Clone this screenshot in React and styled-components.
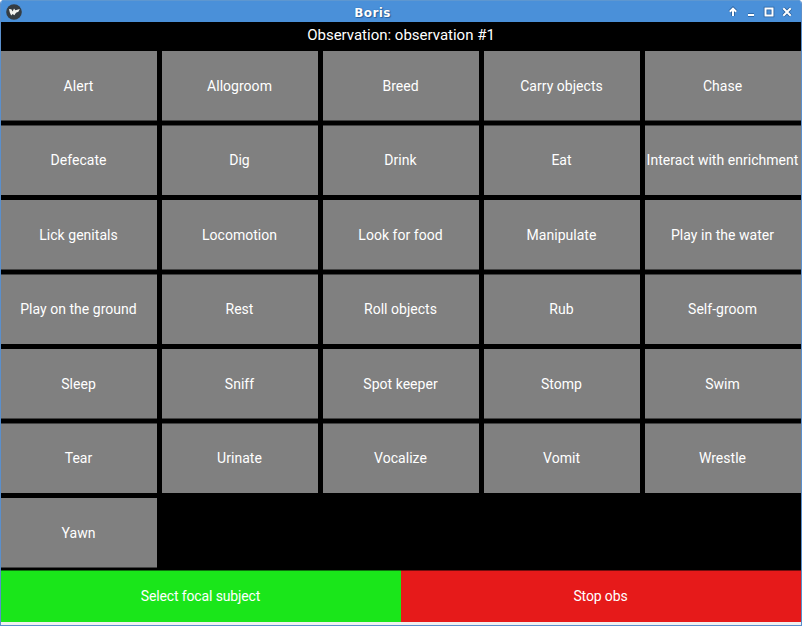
import React from "react";
import styled, { createGlobalStyle } from "styled-components";

const GlobalStyle = createGlobalStyle`
  * { box-sizing: border-box; }
  html, body { margin: 0; background: #fff; overflow: hidden; }
`;

const Window = styled.div`
  width: 802px;
  height: 626px;
  display: flex;
  flex-direction: column;
  border: 1px solid #5a8fcc;
  border-top: 0;
  border-radius: 4px 4px 0 0;
  background: #f0f0f0;
  overflow: hidden;
  font-family: Roboto, sans-serif;
  color: #fff;
`;

const TitleBar = styled.header`
  height: 22px;
  flex: none;
  display: grid;
  grid-template-columns: 29px 1fr 85px;
  align-items: center;
  padding: 0 6px 0 5px;
  background: #4a90d9;
  border-top: 1px solid #5e97d0;
`;

const Title = styled.h1`
  margin: 2px 0 0;
  text-align: center;
  font: bold 12px/18px "DejaVu Sans", sans-serif;
  letter-spacing: 0.35px;
  text-shadow: 0 0 1px #1c4b80, 1px 1px 1px #2a62a0;
`;

const Controls = styled.div`
  display: flex;
  justify-content: flex-end;
  gap: 2px;
  margin-top: 1px;
`;

const Screen = styled.main`
  height: 600px;
  flex: none;
  display: flex;
  flex-direction: column;
  background: #000;
`;

const Heading = styled.div`
  height: 29px;
  text-align: center;
  font-size: 15px;
  line-height: 26px;
`;

const BehaviorGrid = styled.div`
  height: 519px;
  display: grid;
  grid-template-columns: repeat(5, 156px);
  grid-template-rows: 70px;
  grid-auto-rows: 71px 70px;
  gap: 4px 5px;
  align-items: start;
`;

const Button = styled.button`
  display: flex;
  align-items: center;
  justify-content: center;
  margin: 0;
  padding: 0 1px 0 0;
  border: 0;
  color: #fff;
  font: 14px/18px Roboto, sans-serif;
  white-space: nowrap;
`;

const BehaviorButton = styled(Button)`
  height: 70px;
  letter-spacing: 0.03px;
  background: #808080;
  box-shadow: inset 0 ${(p) => (p.$lower ? "1px" : "-1px")} 0 #424242;
`;

const Actions = styled.footer`
  display: grid;
  grid-template-columns: 1fr 1fr;
  height: 52px;
`;

const ActionButton = styled(Button)`
  letter-spacing: -0.13px;
  background: ${(p) => p.$color};
  box-shadow: inset 0 1px 0 ${(p) => p.$edge};
`;

const behaviors = [
  "Alert", "Allogroom", "Breed", "Carry objects", "Chase",
  "Defecate", "Dig", "Drink", "Eat", "Interact with enrichment",
  "Lick genitals", "Locomotion", "Look for food", "Manipulate", "Play in the water",
  "Play on the ground", "Rest", "Roll objects", "Rub", "Self-groom",
  "Sleep", "Sniff", "Spot keeper", "Stomp", "Swim",
  "Tear", "Urinate", "Vocalize", "Vomit", "Wrestle",
  "Yawn",
];

function AppIcon() {
  return (
    <svg width="16" height="16" viewBox="0 0 16 16">
      <circle cx="8" cy="8" r="7.8" fill="#353c42" />
      <path d="M3 5 5.4 5.2 6.6 7.4 8 4.6l1.4 1.6 4.4-1.2-1.4 2.8-2.4 1-1.6 2.4-1.8-1.2-1.4 1.4L3.8 8.4Z" fill="#f2f2ee" />
    </svg>
  );
}

const glyphs = {
  shade: "M8 4v8M4.8 7.8 8 4.6l3.2 3.2",
  minimize: "M5 11h6",
  maximize: "M4.5 4.5h7v7h-7Z",
  close: "M4.3 4.3l7.4 7.4M11.7 4.3l-7.4 7.4",
};

function ControlIcon({ name }) {
  return (
    <svg width="16" height="16" viewBox="0 0 16 16" fill="none">
      <path d={glyphs[name]} stroke="#285f9c" strokeWidth="3.6" />
      <path d={glyphs[name]} stroke="#fff" strokeWidth="2" />
    </svg>
  );
}

export default function App() {
  return (
    <>
      <GlobalStyle />
      <Window>
        <TitleBar>
          <AppIcon />
          <Title>Boris</Title>
          <Controls>
            {Object.keys(glyphs).map((name) => (
              <ControlIcon key={name} name={name} />
            ))}
          </Controls>
        </TitleBar>
        <Screen>
          <Heading>Observation: observation #1</Heading>
          <BehaviorGrid>
            {behaviors.map((label, i) => (
              <BehaviorButton key={label} $lower={Math.floor(i / 5) % 2 === 1}>
                {label}
              </BehaviorButton>
            ))}
          </BehaviorGrid>
          <Actions>
            <ActionButton $color="#1ae61a" $edge="#0d730d">Select focal subject</ActionButton>
            <ActionButton $color="#e61a1a" $edge="#730d0d">Stop obs</ActionButton>
          </Actions>
        </Screen>
      </Window>
    </>
  );
}
